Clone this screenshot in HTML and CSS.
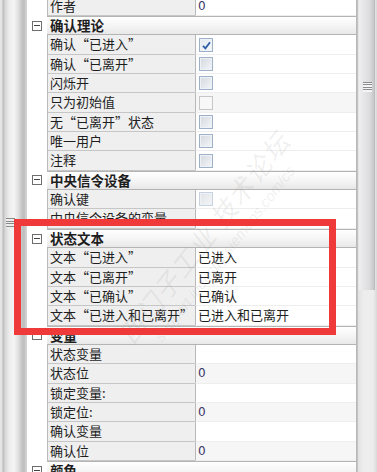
FILE: index.html
```html
<!DOCTYPE html>
<html lang="zh-CN">
<head>
    <meta charset="UTF-8">
    <meta name="viewport" content="width=device-width, initial-scale=1.0">
    <title>属性</title>
    <link rel="stylesheet" href="styles.css">
</head>
<body>
    <div class="window">
        <div class="side-strip">
            <div class="side-grip"></div>
        </div>

        <div class="grid-area">
            <div class="grid">
                <div class="row"><div class="gutter"></div><div class="name">作者</div><div class="value num">0</div></div>

                <div class="row head"><div class="gutter"><span class="toggle"></span></div><div class="group">确认理论</div></div>
                <div class="row"><div class="gutter"></div><div class="name">确认“已进入”</div><div class="value"><span class="cb checked"><svg viewBox="0 0 13 13" width="13" height="13"><path d="M3 6.8 L5.4 9.4 L10 3.2" fill="none" stroke="#2f5fa8" stroke-width="1.8"/></svg></span></div></div>
                <div class="row"><div class="gutter"></div><div class="name">确认“已离开”</div><div class="value"><span class="cb"></span></div></div>
                <div class="row"><div class="gutter"></div><div class="name">闪烁开</div><div class="value"><span class="cb"></span></div></div>
                <div class="row"><div class="gutter"></div><div class="name">只为初始值</div><div class="value ro"><span class="cb off"></span></div></div>
                <div class="row"><div class="gutter"></div><div class="name">无“已离开”状态</div><div class="value"><span class="cb"></span></div></div>
                <div class="row"><div class="gutter"></div><div class="name">唯一用户</div><div class="value"><span class="cb"></span></div></div>
                <div class="row"><div class="gutter"></div><div class="name">注释</div><div class="value"><span class="cb"></span></div></div>

                <div class="row head"><div class="gutter"><span class="toggle"></span></div><div class="group">中央信令设备</div></div>
                <div class="row"><div class="gutter"></div><div class="name">确认键</div><div class="value"><span class="cb dim"></span></div></div>
                <div class="row"><div class="gutter"></div><div class="name">中央信令设备的变量</div><div class="value"></div></div>

                <div class="row head"><div class="gutter"><span class="toggle"></span></div><div class="group">状态文本</div></div>
                <div class="row"><div class="gutter"></div><div class="name">文本“已进入”</div><div class="value">已进入</div></div>
                <div class="row"><div class="gutter"></div><div class="name">文本“已离开”</div><div class="value">已离开</div></div>
                <div class="row"><div class="gutter"></div><div class="name">文本“已确认”</div><div class="value">已确认</div></div>
                <div class="row"><div class="gutter"></div><div class="name">文本“已进入和已离开”</div><div class="value">已进入和已离开</div></div>

                <div class="row head"><div class="gutter"><span class="toggle"></span></div><div class="group">变量</div></div>
                <div class="row"><div class="gutter"></div><div class="name">状态变量</div><div class="value"></div></div>
                <div class="row"><div class="gutter"></div><div class="name">状态位</div><div class="value ro num">0</div></div>
                <div class="row"><div class="gutter"></div><div class="name">锁定变量:</div><div class="value"></div></div>
                <div class="row"><div class="gutter"></div><div class="name">锁定位:</div><div class="value ro num">0</div></div>
                <div class="row"><div class="gutter"></div><div class="name">确认变量</div><div class="value"></div></div>
                <div class="row"><div class="gutter"></div><div class="name">确认位</div><div class="value ro num">0</div></div>

                <div class="row head"><div class="gutter"><span class="toggle"></span></div><div class="group">颜色</div></div>
            </div>
        </div>

        <div class="scrollbar">
            <div class="thumb"><div class="grip"></div></div>
        </div>

        <div class="watermark">
            <div class="wm-big">西门子工业 技术论坛</div>
            <div class="wm-small">support.industry.siemens.com/cs</div>
        </div>

        <div class="highlight"></div>
    </div>
</body>
</html>
```

FILE: styles.css
```css
* {
    box-sizing: border-box;
}
html, body {
    margin: 0;
    padding: 0;
}
body {
    width: 377px;
    height: 472px;
    overflow: hidden;
    background-color: #fff;
    font-family: "Noto Sans CJK SC", "Liberation Sans", sans-serif;
    font-size: 13px;
    color: #1e1e1e;
}
.window {
    position: relative;
    display: flex;
    width: 377px;
    height: 472px;
    overflow: hidden;
}

/* left pane edge */
.side-strip {
    width: 27px;
    flex: none;
    position: relative;
    background: linear-gradient(to right, #e4e4e4 0, #e4e4e4 2px, #b9b9b9 3px, #d6d6d6 5px, #ececec 9px, #f4f4f4 14px, #dcdcdc 19px, #c9c9c9 21px, #bcbcbc 24px, #d2d2d2 26px);
}
.side-grip {
    position: absolute;
    left: 6px;
    top: 218px;
    width: 9px;
    height: 10px;
    background: repeating-linear-gradient(to bottom, #8a8a8a 0, #8a8a8a 1px, #eeeeee 1px, #eeeeee 2.5px);
}

/* property grid */
.grid-area {
    width: 330px;
    flex: none;
    border-right: 1px solid #b8b8b8;
    overflow: hidden;
}
.grid {
    margin-top: -3.3px;
}
.row {
    display: grid;
    grid-template-columns: 20px 148px 1fr;
    height: 19.35px;
}
.gutter {
    background-color: #fff;
    display: flex;
    align-items: center;
    padding-left: 5px;
}
.name {
    background-color: #efefef;
    border-left: 1px solid #b9b9b9;
    border-bottom: 1px solid #c6c6c6;
    padding-left: 2px;
    line-height: 18px;
    white-space: nowrap;
    overflow: hidden;
}
.value {
    background-color: #fff;
    border-left: 1px solid #b9b9b9;
    border-bottom: 1px solid #eeeeee;
    padding-left: 2px;
    line-height: 18px;
    display: flex;
    align-items: center;
    white-space: nowrap;
}
.value.ro {
    background-color: #f6f6f6;
}
.num {
    font-family: "DejaVu Sans", sans-serif;
    font-size: 12px;
    color: #3a3566;
}
.group {
    grid-column: 2 / 4;
    background: linear-gradient(to bottom, #ffffff, #f3f3f3 60%, #e8e8e8);
    border-top: 1px solid #b4b4b4;
    border-bottom: 1px solid #b4b4b4;
    padding-left: 3px;
    font-weight: bold;
    font-size: 13.5px;
    line-height: 17px;
}
.head .name {
    display: none;
}
.toggle {
    position: relative;
    width: 10px;
    height: 10px;
    border: 1px solid #6e6e6e;
    background-color: #fff;
}
.toggle::after {
    content: "";
    position: absolute;
    left: 1px;
    right: 1px;
    top: 3px;
    height: 1px;
    background-color: #444;
}

/* checkboxes */
.cb {
    display: inline-block;
    width: 14px;
    height: 14px;
    margin-left: 1px;
    border: 1px solid #9fb1c9;
    background: linear-gradient(135deg, #d3d9e0, #f4f6f8);
    box-shadow: inset 0 0 0 1px #eef2f6;
}
.cb svg {
    display: block;
    margin: 0;
}
.cb.checked {
    background: linear-gradient(135deg, #e2e8ef, #f8fafc);
}
.cb.off {
    border-color: #c6c6c6;
    background: #f8f8f8;
    box-shadow: none;
}
.cb.dim {
    border-color: #c9d3e0;
    background: linear-gradient(135deg, #e0e3e7, #f4f5f6);
}

/* vertical scrollbar */
.scrollbar {
    width: 20px;
    flex: none;
    border-left: 1px solid #c4c4c4;
    background: linear-gradient(to right, #e2e2e2, #ededed 30%, #ededed 80%, #d9d9d9);
    position: relative;
}
.thumb {
    position: absolute;
    left: 1px;
    right: 2px;
    top: 0;
    height: 290px;
    background: linear-gradient(to right, #f0f0f0, #e9e9ec 20%, #dcdcde 70%, #c6c6c8);
    border-right: 1px solid #bdbdbd;
}
.grip {
    position: absolute;
    left: 4px;
    top: 82px;
    width: 9px;
    height: 10px;
    background: repeating-linear-gradient(to bottom, #8c8c8c 0, #8c8c8c 1px, #f4f4f4 1px, #f4f4f4 2.5px);
}

/* forum watermark */
.watermark {
    position: absolute;
    left: 60px;
    top: 215px;
    width: 300px;
    transform: rotate(-52deg);
    transform-origin: center;
    color: rgba(160, 160, 160, 0.16);
    pointer-events: none;
    text-align: center;
}
.wm-big {
    font-size: 26px;
    font-style: italic;
    letter-spacing: 2px;
}
.wm-small {
    font-family: "Liberation Sans", sans-serif;
    font-size: 15px;
    font-style: italic;
}

/* red marker box */
.highlight {
    position: absolute;
    left: 14px;
    top: 219px;
    width: 322px;
    height: 116px;
    border: 7px solid #f03a3a;
}
```
